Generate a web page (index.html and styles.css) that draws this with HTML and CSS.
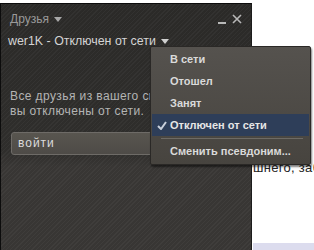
FILE: index.html
```html
<!DOCTYPE html>
<html>
<head>
<meta charset="utf-8">
<link rel="stylesheet" href="styles.css">
</head>
<body>
<div class="page">
  <div class="page-line">шнего, заб</div>
  <div class="page-foot"></div>
</div>
<div class="panel">
  <div class="head">
    <div class="title">Друзья <span class="caret"></span></div>
    <div class="controls">
      <span class="min"></span>
      <svg class="close" width="10" height="10" viewBox="0 0 10 10"><path d="M1 1L9 9M9 1L1 9" stroke="#b8b8b8" stroke-width="1.6"/></svg>
    </div>
  </div>
  <div class="status">wer1K - Отключен от сети <span class="caret light"></span></div>
  <p class="msg"><span class="ln">Все друзья из вашего списка увидят, что</span><span class="ln">вы отключены от сети.</span></p>
  <div class="btn">войти</div>
</div>
<div class="menu">
  <div class="item">В сети</div>
  <div class="item">Отошел</div>
  <div class="item">Занят</div>
  <div class="item active"><svg class="check" width="10" height="9" viewBox="0 0 10 9"><path d="M1 5L4 8L9 1" fill="none" stroke="#c9d0dc" stroke-width="2"/></svg>Отключен от сети</div>
  <div class="sep"></div>
  <div class="item">Сменить псевдоним...</div>
</div>
</body>
</html>
```
FILE: styles.css
```css
html, body { margin: 0; padding: 0; }
body {
  width: 314px; height: 250px; overflow: hidden; position: relative;
  background: #fff; font-family: "Liberation Sans", Arial, sans-serif;
}
.page { display: flex; flex-direction: column; height: 250px; }
.page-line {
  margin-top: 160px; padding-left: 253px; font-size: 13px; color: #222;
  white-space: nowrap; letter-spacing: 0.3px;
}
.page-foot { margin-top: auto; margin-left: 253px; height: 7px; background: #dcdcee; }

.panel {
  position: absolute; left: 0; top: 3px; width: 252px; height: 247px;
  box-sizing: border-box; overflow: hidden;
  border-top: 1px solid #0c0c0c; border-left: 1px solid #0c0c0c; border-right: 1px solid #1c1c1c;
  background:
    repeating-linear-gradient(135deg, rgba(255,255,255,0.035) 0 1px, rgba(0,0,0,0) 1px 3px),
    linear-gradient(#2b2a28, #2f2e2c 60%, #383634 66%, #383634);
  padding: 0 0 0 7px;
}
.head { display: flex; justify-content: space-between; align-items: center; height: 26px; padding-top: 2px; }
.title { color: #9a9a9a; font-size: 12px; padding-left: 2px; display: flex; align-items: center; gap: 5px; }
.caret { display: inline-block; width: 0; height: 0; border-left: 4px solid transparent; border-right: 4px solid transparent; border-top: 5px solid #a8a8a8; }
.caret.light { border-top-color: #d0d0d0; margin-left: 5px; }
.controls { display: flex; align-items: center; gap: 6px; padding-right: 9px; }
.min { width: 8px; height: 2px; background: #b8b8b8; margin-top: 8px; }
.status { color: #d4d4d4; font-size: 12.4px; display: flex; align-items: center; height: 18px; }
.msg {
  margin: 39px 0 0 2px; color: #b4b4b4; font-size: 12px; line-height: 15px; letter-spacing: 0.4px;
  display: flex; flex-direction: column;
}
.ln { white-space: nowrap; }
.btn {
  margin: 13px 0 0 3px; width: 150px; height: 23px; box-sizing: border-box;
  border: 1px solid #6e6b67; border-radius: 3px;
  background: linear-gradient(#58554f, #4e4b47);
  color: #dcdcdc; font-size: 12px; letter-spacing: 1px; line-height: 21px; padding-left: 6px;
}

.menu {
  position: absolute; left: 150px; top: 46px; width: 161px; box-sizing: border-box;
  padding: 1px 1px 2px;
  background: linear-gradient(#55524e, #47443f);
  border: 1px solid #2a2826; border-radius: 2px;
  box-shadow: 1px 2px 2px rgba(0,0,0,0.5);
}
.item {
  height: 22px; display: flex; align-items: center; padding-left: 18px;
  color: #dadada; font-weight: bold; font-size: 11px; position: relative;
}
.item.active { background: #2e3e59; color: #e6e6e6; }
.check { position: absolute; left: 5px; top: 7px; }
.sep { height: 1px; background: #6e6b66; margin: 2px 6px 1px 9px; }
```
